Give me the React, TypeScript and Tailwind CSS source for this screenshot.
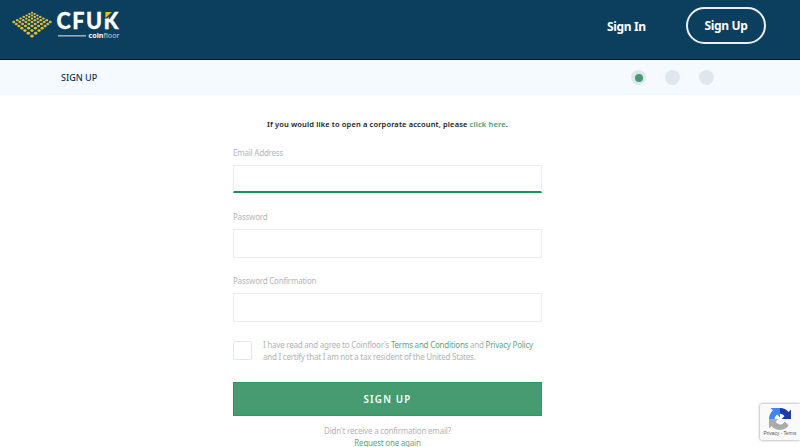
const GRID = 7;

const dots = Array.from({ length: GRID * GRID }, (_, i) => {
  const u = (i % GRID) / (GRID - 1);
  const v = Math.floor(i / GRID) / (GRID - 1);
  const s = (u + v) / 2;
  const w = 1 - 0.344 * s;
  return {
    x: 32 + ((u - v) * 15.1) / w,
    y: 12.8 + (23.2 * s * 0.656) / w,
    r: 1 / w,
  };
});

function Logo() {
  return (
    <svg className="h-[59px] w-[130px]" viewBox="0 0 130 59" role="img" aria-label="CFUK coinfloor">
      {dots.map((d, i) => (
        <ellipse key={i} cx={d.x} cy={d.y} rx={d.r * 1.2} ry={d.r} fill="#e0bb3c" />
      ))}
      <text
        x="61.4 78.6 93.5 112.6"
        y="29.3"
        transform="scale(0.92 1)"
        fill="#fff"
        stroke="#fff"
        strokeWidth="0.3"
        fontFamily="Lato, sans-serif"
        fontSize="23.5"
        fontWeight="900"
      >
        CFUK
      </text>
      <path d="M104 10h8.4v2.8l-5 5.7H104z" fill="#0c3e5d" />
      <path d="M105.4 12h6.6l-6.6 6z" fill="#e8b92f" />
      <path d="M58 35.8h28" stroke="#9fb3c1" strokeWidth="1.5" />
      <text x="88.5" y="38" fill="#fff" fontFamily="Noto Sans, sans-serif" fontSize="7.2" fontWeight="700">
        coin<tspan fill="#c5d2db" fontWeight="400">floor</tspan>
      </text>
    </svg>
  );
}

function RecaptchaIcon() {
  return (
    <svg className="h-[22px] w-[22px]" viewBox="0 0 64 64">
      <path d="M64 31.955l-.033-1.37V4.687l-7.16 7.16C50.948 4.674 42.033.093 32.05.093c-10.4 0-19.622 4.96-25.458 12.64l11.736 11.86a15.55 15.55 0 0 1 4.754-5.334c2.05-1.6 4.952-2.906 8.968-2.906.485 0 .86.057 1.135.163 4.976.393 9.288 3.14 11.828 7.124l-8.307 8.307L64 31.953" fill="#1c3aa9" />
      <path d="M31.862.094l-1.37.033H4.594l7.16 7.16C4.58 13.147 0 22.06 0 32.046c0 10.4 4.96 19.622 12.64 25.458L24.5 45.768a15.55 15.55 0 0 1-5.334-4.754c-1.6-2.05-2.906-4.952-2.906-8.968 0-.485.057-.86.163-1.135.393-4.976 3.14-9.288 7.124-11.828l8.307 8.307L31.86.095" fill="#4285f4" />
      <path d="M.001 32.045l.033 1.37v25.898l7.16-7.16c5.86 7.173 14.774 11.754 24.76 11.754 10.4 0 19.622-4.96 25.458-12.64l-11.736-11.86a15.55 15.55 0 0 1-4.754 5.334c-2.05 1.6-4.952 2.906-8.968 2.906-.485 0-.86-.057-1.135-.163-4.976-.393-9.288-3.14-11.828-7.124l8.307-8.307L.001 32.047" fill="#ababab" />
    </svg>
  );
}

function Field({ label, focused }: { label: string; focused?: boolean }) {
  return (
    <label className="block h-[64px]">
      <span className="block h-[18px] text-[8px] leading-[11px] tracking-[-0.22px] text-[#b3b7ba]">{label}</span>
      <input
        className={`block w-full border border-[#ececec] bg-white px-2 text-xs outline-none ${
          focused ? 'h-[28px] border-b-2 border-b-[#159657]' : 'h-[29px]'
        }`}
      />
    </label>
  );
}

export default function App() {
  return (
    <div className="relative h-[447px] w-[800px] overflow-hidden bg-white font-['Noto_Sans',sans-serif]">
      <header className="flex h-[60px] items-start justify-between border-b border-[#07163f] bg-[#0c3e5d]">
        <Logo />
        <nav className="mt-[7px] mr-[34px] flex items-center text-[12px] font-bold text-white">
          <a className="mt-[2px] mr-[40px] w-[39px] tracking-[-0.35px] whitespace-nowrap">Sign In</a>
          <a className="flex h-[37px] w-[80px] items-center justify-center rounded-full border-2 border-[#e9eef2] pt-px tracking-[-0.35px]">
            Sign Up
          </a>
        </nav>
      </header>

      <div className="flex h-[35px] items-center justify-between bg-[#f5faff] pr-[86px] pl-[61px]">
        <h1 className="text-[9px] font-medium text-[#123653]">SIGN UP</h1>
        <div className="flex gap-[19px]">
          <span className="flex size-[15px] items-center justify-center rounded-full bg-[#dfe7ee]">
            <span className="size-[8px] rounded-full bg-[#479b70]" />
          </span>
          <span className="size-[15px] rounded-full bg-[#dfe7ee]" />
          <span className="size-[15px] rounded-full bg-[#dfe7ee]" />
        </div>
      </div>

      <main className="ml-[233px] w-[309px] pt-[23px]">
        <p className="h-[29px] text-center text-[7.5px] leading-[12px] font-semibold tracking-[0.13px] whitespace-nowrap text-[#161a1d]">
          If you would like to open a corporate account, please <a className="text-[#459b70]">click here</a>.
        </p>

        <Field label="Email Address" focused />
        <Field label="Password" />
        <Field label="Password Confirmation" />

        <div className="flex h-[43px]">
          <span className="mt-[2px] size-[19px] shrink-0 rounded-[2px] border border-[#e3e6e8]" />
          <p className="ml-[11px] text-[8px] leading-[11.5px] tracking-[-0.23px] whitespace-nowrap text-[#b0b4b7]">
            <span className="block">
              I have read and agree to Coinfloor's <a className="text-[#64a583]">Terms and Conditions</a> and{' '}
              <a className="text-[#64a583]">Privacy Policy</a>
            </span>
            <span className="block">and I certify that I am not a tax resident of the United States.</span>
          </p>
        </div>

        <button className="block h-[34px] w-full border border-[#249a62] bg-[#479b70] pt-[2px] text-[9.8px] font-semibold tracking-[1.2px] text-white">
          SIGN UP
        </button>

        <div className="mt-[9px] text-center text-[8px] leading-[11.5px] tracking-[-0.21px] text-[#b0b4b7]">
          <p>Didn't receive a confirmation email?</p>
          <a className="block text-[#64a583]">Request one again</a>
        </div>
      </main>

      <div className="absolute top-[404px] right-0 flex h-[36px] w-[40px] flex-col items-center rounded-l-[2px] bg-[#fafafa] pt-[4px] shadow-[0_0_3px_#888]">
        <RecaptchaIcon />
        <span className="font-['Liberation_Sans',sans-serif] text-[4.8px] leading-[7px] whitespace-nowrap text-[#555]">
          Privacy - Terms
        </span>
      </div>
    </div>
  );
}
